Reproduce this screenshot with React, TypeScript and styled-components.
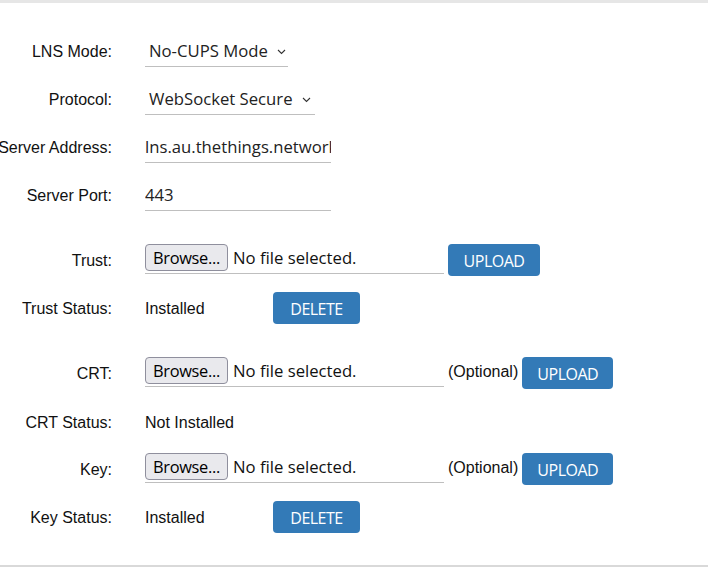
import React from "react";
import styled, { createGlobalStyle } from "styled-components";

const Global = createGlobalStyle`
  html, body { margin: 0; padding: 0; background: #fff; }
  * { box-sizing: border-box; }
`;

const Panel = styled.div`
  width: 708px;
  height: 567px;
  overflow: hidden;
  border-top: 3px solid #e6e6e6;
  border-bottom: 2px solid #d9d9d9;
  display: flex;
  flex-direction: column;
  font-family: "Liberation Sans", Arial, sans-serif;
  color: #111;
`;

const Row = styled.div<{ $mt: number }>`
  display: flex;
  align-items: flex-start;
  height: 32px;
  margin-top: ${(p) => p.$mt}px;
  gap: 33px;
`;

const Label = styled.div`
  width: 112px;
  flex-shrink: 0;
  height: 32px;
  padding-top: 1px;
  display: flex;
  align-items: center;
  justify-content: flex-end;
  white-space: nowrap;
  font-size: 16px;
  color: #111;
`;

const Value = styled.div`
  display: flex;
  align-items: flex-start;
  height: 32px;
`;

const UnderField = styled.div<{ $w: number }>`
  width: ${(p) => p.$w}px;
  height: 32px;
  border-bottom: 1px solid #bfbfbf;
  display: flex;
  align-items: center;
  font-family: "Open Sans", "Noto Sans", sans-serif;
  font-size: 16.7px;
  color: #222;
  white-space: nowrap;
  overflow: hidden;
`;

const SelectText = styled.span`
  padding-left: 4px;
`;

const Chevron = styled.svg`
  margin-left: 9px;
  margin-top: 2px;
  flex-shrink: 0;
`;

const FileField = styled.div`
  width: 299px;
  height: 30px;
  border-bottom: 1px solid #bfbfbf;
  display: flex;
  align-items: flex-start;
  font-family: "Open Sans", "Noto Sans", sans-serif;
  font-size: 16.7px;
  color: #111;
  white-space: nowrap;
`;

const BrowseButton = styled.button`
  width: 83px;
  height: 27px;
  padding: 0;
  margin: 0 5px 0 0;
  background: #e9e9ed;
  border: 1px solid #8f8f9d;
  border-radius: 4px;
  font-family: "Open Sans", "Noto Sans", sans-serif;
  font-size: 16.4px;
  letter-spacing: -0.3px;
  color: #000;
  line-height: 25px;
`;

const FileName = styled.span`
  line-height: 27px;
`;

const Optional = styled.span`
  height: 32px;
  display: flex;
  align-items: center;
  margin-left: 4px;
  font-size: 16px;
  color: #111;
  margin-top: -1px;
`;

const BlueButton = styled.button<{ $w: number; $ml: number }>`
  width: ${(p) => p.$w}px;
  height: 32px;
  margin-left: ${(p) => p.$ml}px;
  padding: 2px 0 0;
  background: #337ab7;
  border: none;
  border-radius: 4px;
  color: #fff;
  font-family: "Open Sans", "Noto Sans", sans-serif;
  font-size: 16px;
  letter-spacing: -0.5px;
  text-transform: uppercase;
`;

const StatusText = styled.span`
  width: 128px;
  height: 32px;
  padding-top: 1px;
  display: flex;
  align-items: center;
  font-size: 16px;
  color: #111;
`;

const ChevronIcon = () => (
  <Chevron width="9" height="6" viewBox="0 0 9 6">
    <polyline points="1,1 4.5,4.5 8,1" fill="none" stroke="#333" strokeWidth="1.1" />
  </Chevron>
);

export default function App() {
  return (
    <>
      <Global />
      <Panel>
        <Row $mt={32}>
          <Label>LNS Mode:</Label>
          <Value>
            <UnderField $w={143}>
              <SelectText>No-CUPS Mode</SelectText>
              <ChevronIcon />
            </UnderField>
          </Value>
        </Row>
        <Row $mt={16}>
          <Label>Protocol:</Label>
          <Value>
            <UnderField $w={170}>
              <SelectText>WebSocket Secure</SelectText>
              <ChevronIcon />
            </UnderField>
          </Value>
        </Row>
        <Row $mt={16}>
          <Label>Server Address:</Label>
          <Value>
            <UnderField $w={186}>lns.au.thethings.network</UnderField>
          </Value>
        </Row>
        <Row $mt={16}>
          <Label>Server Port:</Label>
          <Value>
            <UnderField $w={186}>443</UnderField>
          </Value>
        </Row>
        <Row $mt={33}>
          <Label>Trust:</Label>
          <Value>
            <FileField>
              <BrowseButton>Browse...</BrowseButton>
              <FileName>No file selected.</FileName>
            </FileField>
            <BlueButton $w={92} $ml={4}>Upload</BlueButton>
          </Value>
        </Row>
        <Row $mt={16}>
          <Label>Trust Status:</Label>
          <Value>
            <StatusText>Installed</StatusText>
            <BlueButton $w={87} $ml={0}>Delete</BlueButton>
          </Value>
        </Row>
        <Row $mt={33}>
          <Label>CRT:</Label>
          <Value>
            <FileField>
              <BrowseButton>Browse...</BrowseButton>
              <FileName>No file selected.</FileName>
            </FileField>
            <Optional>(Optional)</Optional>
            <BlueButton $w={91} $ml={4}>Upload</BlueButton>
          </Value>
        </Row>
        <Row $mt={17}>
          <Label>CRT Status:</Label>
          <Value>
            <StatusText>Not Installed</StatusText>
          </Value>
        </Row>
        <Row $mt={15}>
          <Label>Key:</Label>
          <Value>
            <FileField>
              <BrowseButton>Browse...</BrowseButton>
              <FileName>No file selected.</FileName>
            </FileField>
            <Optional>(Optional)</Optional>
            <BlueButton $w={91} $ml={4}>Upload</BlueButton>
          </Value>
        </Row>
        <Row $mt={16}>
          <Label>Key Status:</Label>
          <Value>
            <StatusText>Installed</StatusText>
            <BlueButton $w={87} $ml={0}>Delete</BlueButton>
          </Value>
        </Row>
      </Panel>
    </>
  );
}
